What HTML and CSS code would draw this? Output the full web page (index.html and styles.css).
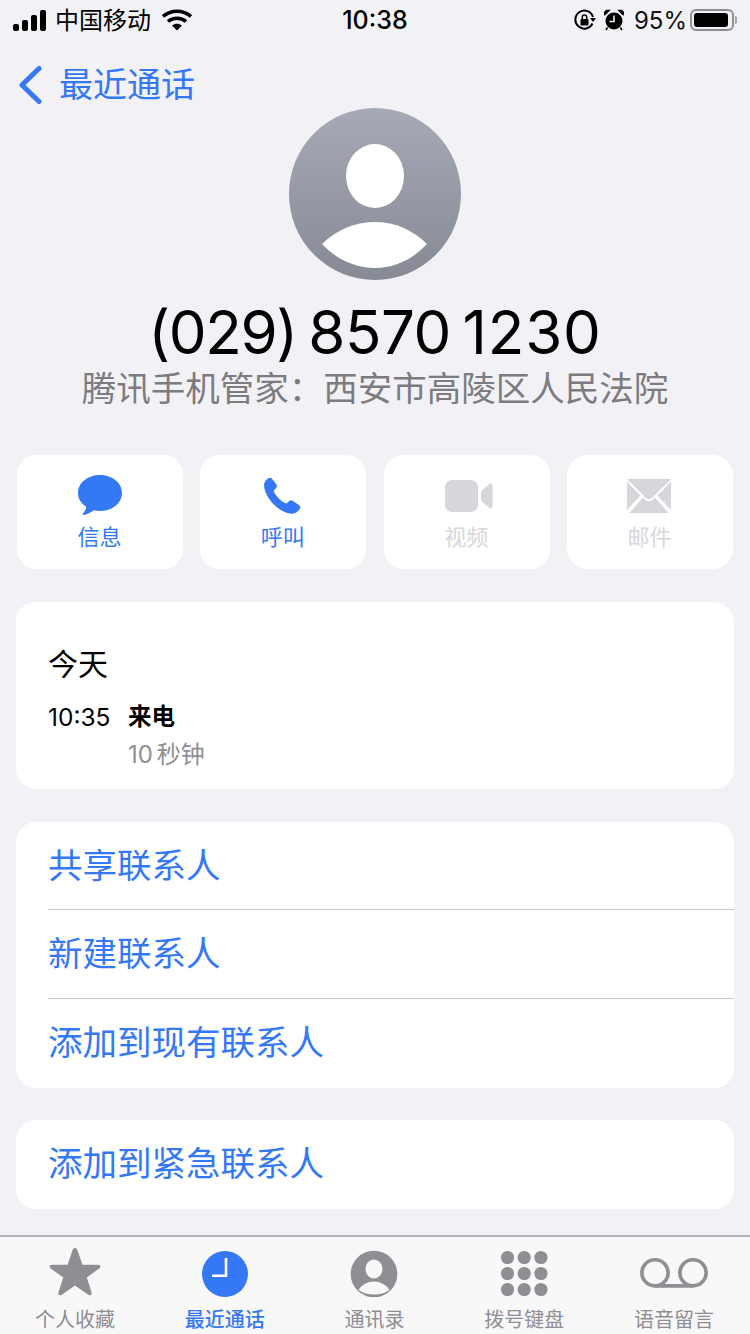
FILE: index.html
```html
<!DOCTYPE html>
<html lang="zh-CN">
<head>
    <meta charset="UTF-8">
    <title>最近通话</title>
    <link rel="stylesheet" href="styles.css">
</head>
<body>
<div class="page">
    <!--状态栏-->
    <div class="status">
        <div class="status-left">
            <svg class="signal" width="34" height="21" viewBox="0 0 34 21"><rect x="0" y="14" width="6" height="7" rx="2"/><rect x="9" y="10" width="6" height="11" rx="2"/><rect x="18" y="5" width="6" height="16" rx="2"/><rect x="27" y="0" width="6" height="21" rx="2"/></svg>
            <span class="carrier">中国移动</span>
            <svg class="wifi" width="30" height="22" viewBox="0 0 30 22"><path d="M1 7.500C9 .5 21 .5 29 7.500" fill="none" stroke="#000" stroke-width="3.600"/><path d="M6 12.500c5-4.300 13-4.300 18 0" fill="none" stroke="#000" stroke-width="3.600"/><path d="M10 16.500c3-2.300 7-2.300 10 0l-5 5z"/></svg>
        </div>
        <div class="status-time">10:38</div>
        <div class="status-right">
            <svg width="22" height="22" viewBox="0 0 22 22"><path d="M18.500 14.500A9 9 0 1 1 19 8" fill="none" stroke="#000" stroke-width="2"/><path d="M16 9h6l-3 4z"/><rect x="6.500" y="10" width="8" height="6.500" rx="1"/><path d="M8.300 10V8.300a2.200 2.200 0 0 1 4.400 0V10" fill="none" stroke="#000" stroke-width="1.500"/></svg>
            <svg class="alarm" width="20" height="22" viewBox="0 0 20 22"><circle cx="10" cy="12" r="8.500"/><path d="M1 5.500 5 1.500H2.500L.5 3.500zM19 5.500 15 1.500h2.500l2 2zM3.500 18.500 2 21M16.500 18.500 18 21" stroke="#000" stroke-width="1.500"/><path d="M10 6.500V12.500H5.500" fill="none" stroke="#f1f1f6" stroke-width="1.600"/></svg>
            <span class="percent">95%</span>
            <div class="battery"><div class="battery-fill"></div></div>
            <div class="battery-cap"></div>
        </div>
    </div>

    <!--返回-->
    <div class="nav">
        <svg width="24" height="38" viewBox="0 0 24 38"><path d="M21 2.500 4 19l17 16.500" fill="none" stroke="#3478f6" stroke-width="5" stroke-linecap="round" stroke-linejoin="round"/></svg>
        <span class="nav-title">最近通话</span>
    </div>

    <!--头像和号码-->
    <div class="head">
        <svg class="avatar" width="172" height="172" viewBox="0 0 172 172">
            <defs><linearGradient id="avatarBg" x1="0" y1="0" x2="0" y2="1"><stop offset="0" stop-color="#a6aab6"/><stop offset="1" stop-color="#868a95"/></linearGradient></defs>
            <circle cx="86" cy="86" r="86" fill="url(#avatarBg)"/>
            <ellipse cx="86" cy="68" rx="29" ry="32" fill="#fff"/>
            <path d="M33 136C47 122 66 114 86 114s38 8 52 22C124 151 106 160 86 160S47 151 33 136z" fill="#fff"/>
        </svg>
        <div class="number"><span class="num-area">(029)</span> 8570 <span class="num-end">1230</span></div>
        <div class="label">腾讯手机管家：西安市高陵区人民法院</div>
    </div>

    <!--操作按钮-->
    <div class="actions">
        <div class="action">
            <svg width="46" height="42" viewBox="0 0 46 42"><path d="M23 1c12.300 0 22 7.900 22 18s-9.700 18-22 18c-2.200 0-4.300-.3-6.300-.7C13.500 38.800 9 41 6.500 41c-1 0-1.200-1-.5-1.700 1.500-1.500 3-4 3.300-6.500C4 29.500 1 24.600 1 19 1 8.900 10.700 1 23 1z" fill="#3478f6"/></svg>
            <span class="action-text">信息</span>
        </div>
        <div class="action">
            <svg width="46" height="42" viewBox="0 0 46 42"><path d="M8 4.500c1.300-1 3-1 4 .2l4.300 5.500c.9 1.200.8 2.700-.2 3.800l-1.800 2c-.6.700-.6 1.500-.2 2.300 2.500 4.500 6.300 8.300 10.800 10.800.8.400 1.600.4 2.300-.2l2-1.800c1.100-1 2.600-1.100 3.800-.2l6 4c1.500 1.100 1.700 3 .6 4.300-2 2.500-4.800 4.800-8 4.600C18.500 39 4.500 23 4 11.500c-.1-2.800 1.500-5.300 4-7z" fill="#3478f6"/></svg>
            <span class="action-text">呼叫</span>
        </div>
        <div class="action off">
            <svg width="50" height="42" viewBox="0 0 50 42"><rect x="4" y="6" width="33" height="32" rx="7" fill="#d6d7da"/><path d="M42 15.500 48.500 10c1.300-1 3-.4 3 1.500v21c0 1.900-1.700 2.500-3 1.500L42 28.500c-1.300-1-2-2.300-2-3.700v-5.600c0-1.400.7-2.700 2-3.700z" fill="#d6d7da"/></svg>
            <span class="action-text">视频</span>
        </div>
        <div class="action off">
            <svg width="46" height="42" viewBox="0 0 46 42"><g transform="translate(0 2)" fill="#d6d7da"><path d="M1 3h44L26 22c-1.700 1.500-4.300 1.500-6 0z"/><path d="M1 5.500V34L14.500 19.500zM45 5.500V34L31.500 19.500zM3.500 37h39L29 21.500 26.500 24c-2 1.800-5 1.800-7 0L17 21.500z"/></g></svg>
            <span class="action-text">邮件</span>
        </div>
    </div>

    <!--通话记录-->
    <div class="card recent">
        <div class="recent-day">今天</div>
        <div class="recent-row">
            <span class="recent-time">10:35</span>
            <div>
                <div class="recent-type">来电</div>
                <div class="recent-len">10 秒钟</div>
            </div>
        </div>
    </div>

    <div class="card links">
        <div class="link-row">共享联系人</div>
        <div class="link-row">新建联系人</div>
        <div class="link-row">添加到现有联系人</div>
    </div>

    <div class="card single">
        <div class="link-row">添加到紧急联系人</div>
    </div>

    <!--底部标签栏-->
    <div class="tabs">
        <div class="tab">
            <svg width="54" height="50" viewBox="0 0 54 50"><path d="M27 1c1.200 0 1.900.8 2.400 2.100l5 14.600h15.500c2.600 0 3.400 2.300 1.400 3.700L38.800 30.500l4.800 14.900c.7 2.300-1.300 3.700-3.300 2.300L27 38.500 13.700 47.700c-2 1.400-4 0-3.300-2.300l4.800-14.900L2.700 21.400c-2-1.400-1.200-3.700 1.400-3.700h15.500l5-14.600C25.100 1.800 25.800 1 27 1z" fill="#8e8e93"/></svg>
            <span class="tab-text">个人收藏</span>
        </div>
        <div class="tab on">
            <svg width="54" height="50" viewBox="0 0 54 50"><circle cx="27" cy="27" r="23" fill="#3478f6"/><path d="M28 11v17.700H14" fill="none" stroke="#fff" stroke-width="2.600"/></svg>
            <span class="tab-text">最近通话</span>
        </div>
        <div class="tab">
            <svg width="54" height="50" viewBox="0 0 54 50"><circle cx="27" cy="27" r="23.300" fill="#8e8e93"/><ellipse cx="27" cy="22" rx="8.500" ry="9.500" fill="#f8f8f9"/><path d="M11.500 43C15 37.500 21 34.500 27 34.500S39 37.500 42.500 43C38 46 33 47.500 27 47.500S16 46 11.500 43z" fill="#f8f8f9"/></svg>
            <span class="tab-text">通讯录</span>
        </div>
        <div class="tab">
            <svg width="54" height="50" viewBox="0 0 54 50"><g fill="#8e8e93"><circle cx="10.500" cy="10.500" r="6.600"/><circle cx="27.200" cy="10.500" r="6.600"/><circle cx="43.900" cy="10.500" r="6.600"/><circle cx="10.500" cy="26.500" r="6.600"/><circle cx="27.200" cy="26.500" r="6.600"/><circle cx="43.900" cy="26.500" r="6.600"/><circle cx="10.500" cy="42.500" r="6.600"/><circle cx="27.200" cy="42.500" r="6.600"/><circle cx="43.900" cy="42.500" r="6.600"/></g></svg>
            <span class="tab-text">拨号键盘</span>
        </div>
        <div class="tab">
            <svg width="70" height="50" viewBox="0 0 70 50"><g fill="none" stroke="#8e8e93" stroke-width="3.600"><circle cx="16" cy="25.800" r="13.100"/><circle cx="54" cy="25.800" r="13.100"/><path d="M16 38.900h38"/></g></svg>
            <span class="tab-text">语音留言</span>
        </div>
    </div>
</div>
</body>
</html>
```

FILE: styles.css
```css
body, div, span {
    margin: 0;
    padding: 0;
}

body {
    background: #f1f1f6;
    font-family: "Inter", "Noto Sans CJK SC", sans-serif;
    color: #000;
}

.page {
    width: 750px;
    height: 1334px;
    overflow: hidden;
    display: flex;
    flex-direction: column;
    background: #f1f1f6;
}

.status {
    height: 40px;
    padding: 0 13px;
    display: flex;
    align-items: center;
    justify-content: space-between;
    flex-shrink: 0;
}

.status-left,
.status-right {
    width: 280px;
    display: flex;
    align-items: center;
}

.status-right {
    justify-content: flex-end;
    font-size: 25px;
}

.carrier {
    font-size: 24px;
    margin: 0 11px 3px 8px;
}

.status-time {
    font-size: 25px;
    font-weight: 500;
}

.alarm {
    margin-left: 8px;
}

.percent {
    margin-left: 10px;
    margin-right: 3px;
    font-size: 24px;
    color: #111;
}

.battery {
    width: 44px;
    height: 22px;
    box-sizing: border-box;
    border: 2px solid #8e8e93;
    border-radius: 6px;
    padding: 2px;
}

.battery-fill {
    width: 95%;
    height: 100%;
    background: #000;
    border-radius: 3px;
}

.battery-cap {
    width: 2px;
    height: 8px;
    margin-left: 1px;
    background: #a0a0a5;
    border-radius: 0 2px 2px 0;
}

.nav {
    height: 50px;
    padding: 0 0 0 18px;
    margin-top: 20px;
    display: flex;
    align-items: center;
    flex-shrink: 0;
}

.nav-title {
    margin: 0 0 5px 17px;
    font-size: 34px;
    color: #3478f6;
}

.head {
    margin-top: -2px;
    display: flex;
    flex-direction: column;
    align-items: center;
    flex-shrink: 0;
}

.number {
    margin-top: 16px;
    font-size: 60px;
    line-height: 72px;
    letter-spacing: -.4px;
    word-spacing: -5px;
}

.num-area {
    letter-spacing: -1.400px;
}

.num-end {
    letter-spacing: .8px;
}

.label {
    margin-top: -2px;
    font-size: 34.500px;
    line-height: 46px;
    color: #7c7c80;
}

.actions {
    margin: 43px 17px 0;
    display: flex;
    justify-content: space-between;
    flex-shrink: 0;
}

.action {
    width: 166px;
    height: 114px;
    background: #fff;
    border-radius: 20px;
    display: flex;
    flex-direction: column;
    align-items: center;
    padding: 19px 1px 0 0;
    box-sizing: border-box;
    color: #3478f6;
}

.action svg {
    display: block;
    overflow: visible;
}

.action-text {
    font-size: 22px;
    line-height: 30px;
    margin-top: 6px;
}

.off {
    color: #d6d7da;
}

.card {
    margin: 33px 16px 0;
    background: #fff;
    border-radius: 20px;
    flex-shrink: 0;
}

.recent {
    height: 187px;
    box-sizing: border-box;
    padding: 41px 32px 0;
}

.recent-day {
    font-size: 30px;
    line-height: 42px;
}

.recent-row {
    display: flex;
    margin-top: 14px;
}

.recent-time {
    width: 80px;
    font-size: 24.500px;
    line-height: 36px;
}

.recent-type {
    font-size: 23.500px;
    line-height: 36px;
    font-weight: 700;
}

.recent-len {
    font-size: 24px;
    line-height: 40px;
    word-spacing: -3px;
    color: #8e8e93;
}

.link-row {
    height: 89px;
    margin-left: 32px;
    box-sizing: border-box;
    line-height: 87px;
    font-size: 34.500px;
    color: #3478f6;
    border-top: 1px solid #c6c6c8;
}

.link-row:first-child {
    border-top: 0;
}

.links {
    padding-bottom: 1px;
}

.links .link-row:first-child {
    height: 87px;
}

.single {
    margin-top: 32px;
}

.tabs {
    margin-top: auto;
    height: 99px;
    box-sizing: border-box;
    border-top: 2px solid #b4b4b8;
    background: #f8f8f9;
    padding: 10px 1px 0 0;
    display: flex;
    justify-content: center;
    flex-shrink: 0;
}

.tab {
    width: 150px;
    display: flex;
    flex-direction: column;
    align-items: center;
    color: #8e8e93;
}

.tab svg {
    display: block;
}

.tab-text {
    font-size: 20px;
    line-height: 28px;
    margin-top: 9px;
}

.on {
    color: #3478f6;
}

.on .tab-text {
    font-weight: 500;
}
```
